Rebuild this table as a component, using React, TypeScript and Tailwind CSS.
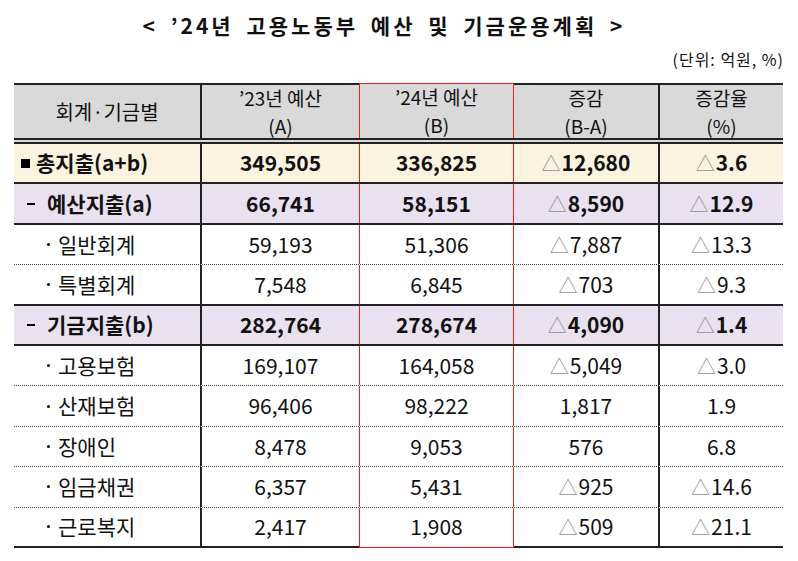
import React from 'react';

type Row = {
  label: string;
  kind: 'total' | 'group' | 'item';
  vals: string[];
  bg: string;
  bottom: 'solid' | 'dotted' | 'last';
};

const rows: Row[] = [
  { label: '총지출(a+b)', kind: 'total', vals: ['349,505', '336,825', '△12,680', '△3.6'], bg: 'bg-[#fbf3df]', bottom: 'solid' },
  { label: '예산지출(a)', kind: 'group', vals: ['66,741', '58,151', '△8,590', '△12.9'], bg: 'bg-[#e9e1f0]', bottom: 'solid' },
  { label: '일반회계', kind: 'item', vals: ['59,193', '51,306', '△7,887', '△13.3'], bg: 'bg-white', bottom: 'dotted' },
  { label: '특별회계', kind: 'item', vals: ['7,548', '6,845', '△703', '△9.3'], bg: 'bg-white', bottom: 'solid' },
  { label: '기금지출(b)', kind: 'group', vals: ['282,764', '278,674', '△4,090', '△1.4'], bg: 'bg-[#e9e1f0]', bottom: 'solid' },
  { label: '고용보험', kind: 'item', vals: ['169,107', '164,058', '△5,049', '△3.0'], bg: 'bg-white', bottom: 'dotted' },
  { label: '산재보험', kind: 'item', vals: ['96,406', '98,222', '1,817', '1.9'], bg: 'bg-white', bottom: 'dotted' },
  { label: '장애인', kind: 'item', vals: ['8,478', '9,053', '576', '6.8'], bg: 'bg-white', bottom: 'dotted' },
  { label: '임금채권', kind: 'item', vals: ['6,357', '5,431', '△925', '△14.6'], bg: 'bg-white', bottom: 'dotted' },
  { label: '근로복지', kind: 'item', vals: ['2,417', '1,908', '△509', '△21.1'], bg: 'bg-white', bottom: 'last' },
];

// col widths: 186 / 159 / 155 / 144 / 125
const Value = ({ v }: { v: string }) =>
  v.startsWith('△') ? (
    <span>
      <span className="text-[#8f8f8f] font-normal text-[19px] mr-[1px]">△</span>
      {v.slice(1)}
    </span>
  ) : (
    <span>{v}</span>
  );

const Label = ({ row }: { row: Row }) => {
  if (row.kind === 'total')
    return (
      <div className="flex items-center pl-[7px] font-bold">
        <span className="w-[9px] h-[9px] bg-black mr-[6px]" />
        {row.label}
      </div>
    );
  if (row.kind === 'group')
    return (
      <div className="flex items-center pl-[13px] font-bold">
        <span className="w-[8px] h-[2px] bg-black mr-[12px]" />
        {row.label}
      </div>
    );
  return (
    <div className="flex items-center pl-[33px]">
      <span className="w-[3px] h-[3px] rounded-full bg-black mr-[8px]" />
      {row.label}
    </div>
  );
};

const HeadCell = ({ top, bottom, className }: { top: string; bottom: string; className: string }) => (
  <div className={`h-full flex flex-col items-center justify-center text-[19px] leading-[28px] ${className}`}>
    <div>{top}</div>
    <div>{bottom}</div>
  </div>
);

const App = () => {
  return (
    <div className="w-[798px] h-[561px] bg-white text-[#111] font-['Noto_Sans_CJK_KR',sans-serif] px-[14px]">
      {/* Title */}
      <div className="flex justify-center pr-[30px] pt-[10px]">
        <h1 className="text-[21px] leading-[30px] font-bold tracking-[3px] [word-spacing:5px]">
          &lt; ’24년 고용노동부 예산 및 기금운용계획 &gt;
        </h1>
      </div>
      <div className="flex justify-end mt-[9px]">
        <span className="text-[16px] leading-[20px] tracking-[1px]">(단위: 억원, %)</span>
      </div>

      {/* Table */}
      <div className="mt-[14px] w-[769px] text-[21px]">
        {/* Header */}
        <div className="flex h-[61px] bg-[#d9d9d9] border-b-[6px] border-double border-[#222]">
          <div className="w-[186px] h-full border-t-2 border-[#222] flex items-center justify-center text-[20px]">
            회계·기금별
          </div>
          <HeadCell top="’23년 예산" bottom="(A)" className="w-[159px] border-t-2 border-l-2 border-[#222]" />
          <HeadCell top="’24년 예산" bottom="(B)" className="w-[155px] border-t border-x border-[#ff1a1a]" />
          <HeadCell top="증감" bottom="(B-A)" className="w-[144px] border-t-2 border-[#222]" />
          <HeadCell top="증감율" bottom="(%)" className="w-[125px] border-t-2 border-l-2 border-[#222]" />
        </div>

        {/* Body */}
        {rows.map((row) => {
          const last = row.bottom === 'last';
          const rowBorder =
            row.bottom === 'solid'
              ? 'border-b-2 border-[#222]'
              : row.bottom === 'dotted'
              ? 'border-b border-dotted border-[#444]'
              : '';
          const bBlack = last ? 'border-b-2 border-b-[#222]' : '';
          const weight = row.kind === 'item' ? 'font-normal' : 'font-bold';
          return (
            <div key={row.label} className={`flex h-[40.4px] ${row.bg} ${rowBorder}`}>
              <div className={`w-[186px] h-full flex items-center ${bBlack}`}>
                <Label row={row} />
              </div>
              <div className={`w-[159px] h-full flex items-center justify-center border-l-2 border-l-[#222] ${weight} ${bBlack}`}>
                <Value v={row.vals[0]} />
              </div>
              <div
                className={`w-[155px] h-full flex items-center justify-center border-x border-x-[#ff1a1a] ${weight} ${
                  last ? 'border-b border-b-[#ff1a1a]' : ''
                }`}
              >
                <Value v={row.vals[1]} />
              </div>
              <div className={`w-[144px] h-full flex items-center justify-center ${weight} ${bBlack}`}>
                <Value v={row.vals[2]} />
              </div>
              <div className={`w-[125px] h-full flex items-center justify-center border-l-2 border-l-[#222] ${weight} ${bBlack}`}>
                <Value v={row.vals[3]} />
              </div>
            </div>
          );
        })}
      </div>
    </div>
  );
};

export default App;
